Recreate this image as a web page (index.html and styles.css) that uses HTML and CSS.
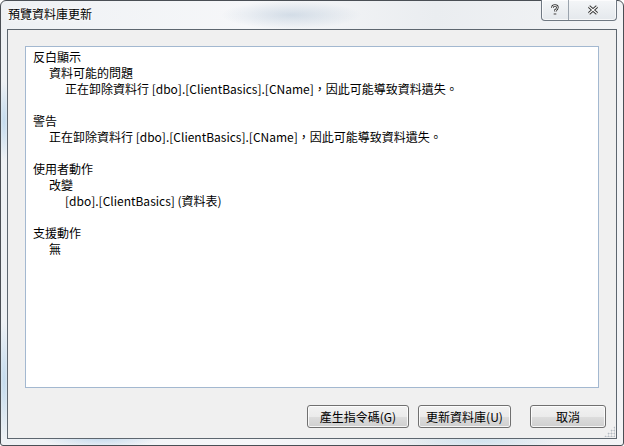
FILE: index.html
```html
<!DOCTYPE html>
<html lang="zh-Hant">
<head>
<meta charset="utf-8">
<title>預覽資料庫更新</title>
<link rel="stylesheet" href="styles.css">
</head>
<body>
<div class="window">
  <div class="titlebar">
    <span class="title">預覽資料庫更新</span>
    <div class="caption">
      <button class="cap help" aria-label="說明">
        <svg width="10" height="12" viewBox="0 0 10 12"><path d="M2.5 4 V3 Q2.5 1.5 5 1.5 Q7.5 1.5 7.5 3.5 Q7.5 5 5.5 6 V7.5 M5 9.3 V10.8" fill="none" stroke="#333" stroke-width="2.4"/><path d="M2.5 4 V3 Q2.5 1.5 5 1.5 Q7.5 1.5 7.5 3.5 Q7.5 5 5.5 6 V7.5 M5 9.3 V10.8" fill="none" stroke="#fff" stroke-width="0.9"/></svg>
      </button>
      <button class="cap close" aria-label="關閉">
        <svg width="14" height="10" viewBox="0 0 14 10"><path d="M3 1.5 L11 8.5 M11 1.5 L3 8.5" fill="none" stroke="#333" stroke-width="3"/><path d="M3 1.5 L11 8.5 M11 1.5 L3 8.5" fill="none" stroke="#fff" stroke-width="1.1"/></svg>
      </button>
    </div>
  </div>
  <div class="client">
    <div class="report">
      <div class="section">
        <div class="l0">反白顯示</div>
        <div class="l1">資料可能的問題</div>
        <div class="l2">正在卸除資料行 [dbo].[ClientBasics].[CName]，因此可能導致資料遺失。</div>
      </div>
      <div class="section">
        <div class="l0">警告</div>
        <div class="l1">正在卸除資料行 [dbo].[ClientBasics].[CName]，因此可能導致資料遺失。</div>
      </div>
      <div class="section">
        <div class="l0">使用者動作</div>
        <div class="l1">改變</div>
        <div class="l2">[dbo].[ClientBasics] (資料表)</div>
      </div>
      <div class="section">
        <div class="l0">支援動作</div>
        <div class="l1">無</div>
      </div>
    </div>
    <div class="buttons">
      <button class="btn b1">產生指令碼(G)</button>
      <button class="btn b2">更新資料庫(U)</button>
      <button class="btn b3">取消</button>
    </div>
    <div class="grip"></div>
  </div>
</div>
</body>
</html>
```
FILE: styles.css
```css
* { box-sizing: border-box; }
html, body { margin: 0; padding: 0; }
body {
  width: 624px;
  height: 446px;
  overflow: hidden;
  font-family: "Noto Sans CJK TC", "Noto Sans", sans-serif;
  font-size: 12px;
  color: #000;
  background: #fff;
}
.window {
  position: relative;
  width: 624px;
  height: 446px;
  border: 1px solid #4a4f55;
  border-radius: 6px 6px 3px 3px;
  background:
    radial-gradient(ellipse 60px 10px at 100px 437px, rgba(140,185,225,0.45), transparent),
    radial-gradient(ellipse 80px 8px at 480px 440px, rgba(170,210,235,0.4), transparent),
    radial-gradient(ellipse 70px 14px at 290px 14px, rgba(150,175,200,0.35), transparent),
    radial-gradient(ellipse 6px 40px at 3px 120px, rgba(140,190,230,0.45), transparent),
    radial-gradient(ellipse 6px 60px at 3px 380px, rgba(140,190,230,0.45), transparent),
    linear-gradient(90deg, #eef1f4 0%, #f6f7f9 40%, #eaedf0 70%, #f3f4f6 100%);
  display: flex;
  flex-direction: column;
}
.titlebar {
  height: 28px;
  display: flex;
  align-items: flex-start;
  justify-content: space-between;
}
.title {
  margin: 5px 0 0 7px;
  font-size: 12px;
  line-height: 16px;
  color: #000;
  text-shadow: 0 0 6px #fff, 0 0 3px #fff;
}
.caption {
  display: flex;
  margin: -1px 6px 0 0;
  border: 1px solid #6f7882;
  border-top: none;
  border-radius: 0 0 4px 4px;
  overflow: hidden;
  background: linear-gradient(#f4f6f8, #e4e8ec);
  box-shadow: inset 0 0 0 1px rgba(255,255,255,0.7);
}
.cap {
  height: 20px;
  border: none;
  padding: 0;
  margin: 0;
  background: transparent;
  display: flex;
  align-items: center;
  justify-content: center;
}
.help { width: 27px; border-right: 1px solid #9aa3ad; }
.close { width: 47px; }
.client {
  position: relative;
  flex: 1;
  margin: 0 6px 6px 6px;
  border: 1px solid #5d666f;
  background: #f0f0f0;
  display: flex;
  flex-direction: column;
}
.report {
  height: 342px;
  margin: 16px 17px 0 17px;
  border: 1px solid #a3b8d0;
  background: #fff;
  padding: 2px 0 0 7px;
  line-height: 16px;
}
.section { margin-bottom: 16px; }
.l1 { padding-left: 16px; }
.l2 { padding-left: 32px; }
.buttons {
  display: flex;
  justify-content: flex-end;
  margin: 17px 10px 0 0;
  gap: 9px;
}
.btn {
  height: 23px;
  font-family: "Noto Sans CJK TC", "Noto Sans", sans-serif;
  font-size: 12px;
  color: #000;
  border: 1px solid #707070;
  border-radius: 3px;
  background: linear-gradient(#f2f2f2 0%, #ebebeb 50%, #dddddd 51%, #cfcfcf 100%);
  box-shadow: inset 0 0 0 1px rgba(255,255,255,0.8);
  padding: 0;
}
.b1 { width: 102px; }
.b2 { width: 93px; }
.b3 { width: 76px; margin-left: 10px; }
.grip {
  position: absolute;
  right: 1px;
  bottom: 1px;
  width: 11px;
  height: 11px;
  background-image: radial-gradient(circle, #b5bcc4 0.9px, transparent 1.1px);
  background-size: 3px 3px;
  clip-path: polygon(100% 0, 100% 100%, 0 100%);
}
```
